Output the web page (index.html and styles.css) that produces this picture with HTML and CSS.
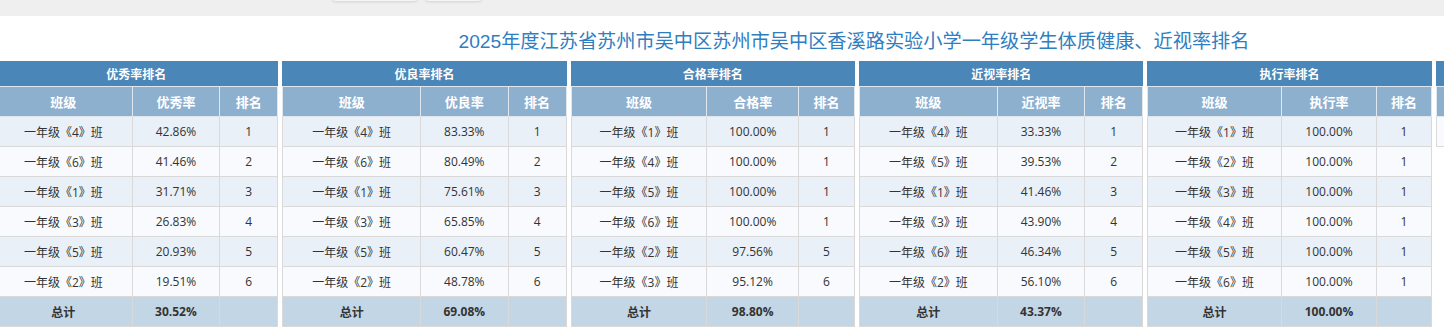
FILE: index.html
```html
<!DOCTYPE html>
<html lang="zh-CN">
<head>
<meta charset="utf-8">
<title>排名</title>
<link rel="stylesheet" href="styles.css">
</head>
<body>
<div class="topbar">
  <span class="tb-btn tb-btn-a"></span>
  <span class="tb-btn tb-btn-b"></span>
</div>
<div class="page">
  <h1 class="title">2025年度江苏省苏州市吴中区苏州市吴中区香溪路实验小学一年级学生体质健康、近视率排名</h1>
  <div class="tables">
    <table class="rank">
      <colgroup><col class="c1"><col class="c2"><col class="c3"></colgroup>
      <thead>
        <tr class="h1"><th colspan="3">优秀率排名</th></tr>
        <tr class="h2"><th>班级</th><th>优秀率</th><th>排名</th></tr>
      </thead>
      <tbody>
        <tr><td>一年级《4》班</td><td>42.86%</td><td>1</td></tr>
        <tr><td>一年级《6》班</td><td>41.46%</td><td>2</td></tr>
        <tr><td>一年级《1》班</td><td>31.71%</td><td>3</td></tr>
        <tr><td>一年级《3》班</td><td>26.83%</td><td>4</td></tr>
        <tr><td>一年级《5》班</td><td>20.93%</td><td>5</td></tr>
        <tr><td>一年级《2》班</td><td>19.51%</td><td>6</td></tr>
        <tr class="total"><td>总计</td><td>30.52%</td><td></td></tr>
      </tbody>
    </table>
    <table class="rank">
      <colgroup><col class="c1"><col class="c2"><col class="c3"></colgroup>
      <thead>
        <tr class="h1"><th colspan="3">优良率排名</th></tr>
        <tr class="h2"><th>班级</th><th>优良率</th><th>排名</th></tr>
      </thead>
      <tbody>
        <tr><td>一年级《4》班</td><td>83.33%</td><td>1</td></tr>
        <tr><td>一年级《6》班</td><td>80.49%</td><td>2</td></tr>
        <tr><td>一年级《1》班</td><td>75.61%</td><td>3</td></tr>
        <tr><td>一年级《3》班</td><td>65.85%</td><td>4</td></tr>
        <tr><td>一年级《5》班</td><td>60.47%</td><td>5</td></tr>
        <tr><td>一年级《2》班</td><td>48.78%</td><td>6</td></tr>
        <tr class="total"><td>总计</td><td>69.08%</td><td></td></tr>
      </tbody>
    </table>
    <table class="rank rank-wide">
      <colgroup><col class="c1"><col class="c2"><col class="c3"></colgroup>
      <thead>
        <tr class="h1"><th colspan="3">合格率排名</th></tr>
        <tr class="h2"><th>班级</th><th>合格率</th><th>排名</th></tr>
      </thead>
      <tbody>
        <tr><td>一年级《1》班</td><td>100.00%</td><td>1</td></tr>
        <tr><td>一年级《4》班</td><td>100.00%</td><td>1</td></tr>
        <tr><td>一年级《5》班</td><td>100.00%</td><td>1</td></tr>
        <tr><td>一年级《6》班</td><td>100.00%</td><td>1</td></tr>
        <tr><td>一年级《2》班</td><td>97.56%</td><td>5</td></tr>
        <tr><td>一年级《3》班</td><td>95.12%</td><td>6</td></tr>
        <tr class="total"><td>总计</td><td>98.80%</td><td></td></tr>
      </tbody>
    </table>
    <table class="rank">
      <colgroup><col class="c1"><col class="c2"><col class="c3"></colgroup>
      <thead>
        <tr class="h1"><th colspan="3">近视率排名</th></tr>
        <tr class="h2"><th>班级</th><th>近视率</th><th>排名</th></tr>
      </thead>
      <tbody>
        <tr><td>一年级《4》班</td><td>33.33%</td><td>1</td></tr>
        <tr><td>一年级《5》班</td><td>39.53%</td><td>2</td></tr>
        <tr><td>一年级《1》班</td><td>41.46%</td><td>3</td></tr>
        <tr><td>一年级《3》班</td><td>43.90%</td><td>4</td></tr>
        <tr><td>一年级《6》班</td><td>46.34%</td><td>5</td></tr>
        <tr><td>一年级《2》班</td><td>56.10%</td><td>6</td></tr>
        <tr class="total"><td>总计</td><td>43.37%</td><td></td></tr>
      </tbody>
    </table>
    <table class="rank rank-wider">
      <colgroup><col class="c1"><col class="c2"><col class="c3"></colgroup>
      <thead>
        <tr class="h1"><th colspan="3">执行率排名</th></tr>
        <tr class="h2"><th>班级</th><th>执行率</th><th>排名</th></tr>
      </thead>
      <tbody>
        <tr><td>一年级《1》班</td><td>100.00%</td><td>1</td></tr>
        <tr><td>一年级《2》班</td><td>100.00%</td><td>1</td></tr>
        <tr><td>一年级《3》班</td><td>100.00%</td><td>1</td></tr>
        <tr><td>一年级《4》班</td><td>100.00%</td><td>1</td></tr>
        <tr><td>一年级《5》班</td><td>100.00%</td><td>1</td></tr>
        <tr><td>一年级《6》班</td><td>100.00%</td><td>1</td></tr>
        <tr class="total"><td>总计</td><td>100.00%</td><td></td></tr>
      </tbody>
    </table>
    <table class="rank rank-short">
      <colgroup><col class="c1"><col class="c2"><col class="c3"></colgroup>
      <thead>
        <tr class="h1"><th colspan="3"></th></tr>
        <tr class="h2"><th></th><th></th><th></th></tr>
      </thead>
      <tbody>
        <tr class="blank"><td></td><td></td><td></td></tr>
      </tbody>
    </table>
  </div>
</div>
</body>
</html>
```
FILE: styles.css
```css
html, body {
  margin: 0;
  padding: 0;
  background: #ffffff;
  overflow: hidden;
}

body {
  font-family: "Open Sans", "Noto Sans CJK SC", "Liberation Sans", sans-serif;
  color: #333333;
}

.topbar {
  height: 16px;
  background: #efefef;
  display: flex;
  align-items: flex-start;
  padding-left: 332px;
  gap: 7px;
}

.tb-btn {
  display: block;
  height: 30px;
  margin-top: -29px;
  background: #f4f4f4;
  border-radius: 4px;
  box-shadow: 0 1px 3px rgba(0, 0, 0, 0.12);
}

.tb-btn-a { width: 86px; }
.tb-btn-b { width: 57px; }

.page {
  width: 1726px;
  margin-left: -6px;
  background: #ffffff;
}

.title {
  margin: 0;
  height: 45px;
  padding-top: 13px;
  box-sizing: border-box;
  font-family: "Liberation Sans", "Noto Sans CJK SC", sans-serif;
  font-weight: normal;
  font-size: 19.2px;
  line-height: 26px;
  color: #2f7ebf;
  text-align: center;
  padding-right: 6px;
}

.tables {
  display: grid;
  grid-template-columns: repeat(6, 1fr);
  column-gap: 4px;
  align-items: start;
}

.rank {
  width: 100%;
  border-collapse: collapse;
  table-layout: fixed;
  border: 1px solid #d9d9d9;
  font-size: 12px;
}

.rank .c1 { width: 48.6%; }
.rank .c2 { width: 30.9%; }
.rank .c3 { width: 20.5%; }

.rank-wide .c1 { width: 47.9%; }
.rank-wide .c2 { width: 32.3%; }
.rank-wide .c3 { width: 19.8%; }

.rank-wider .c1 { width: 47.1%; }
.rank-wider .c2 { width: 33.7%; }
.rank-wider .c3 { width: 19.2%; }

.rank th,
.rank td {
  border: 1px solid #d9d9d9;
  padding: 0;
  text-align: center;
  white-space: nowrap;
  overflow: hidden;
}

.h1 th {
  background: #4a86b8;
  color: #ffffff;
  font-weight: bold;
  height: 24px;
  border-color: #4a86b8 #4a86b8 #dfe6ee #4a86b8;
}

.h2 th {
  background: #8eb0cf;
  color: #ffffff;
  font-weight: bold;
  font-size: 13px;
  height: 29px;
  border-color: #dfe6ee;
}

.rank td {
  height: 29px;
  color: #333333;
}

.rank tbody tr:nth-child(odd) td { background: #e9f0f7; }
.rank tbody tr:nth-child(even) td { background: #f8fafd; }

.rank tbody tr.total td {
  background: #c3d6e5;
  font-weight: bold;
}

.rank tbody tr.blank td { background: #f8fafd; }
```
